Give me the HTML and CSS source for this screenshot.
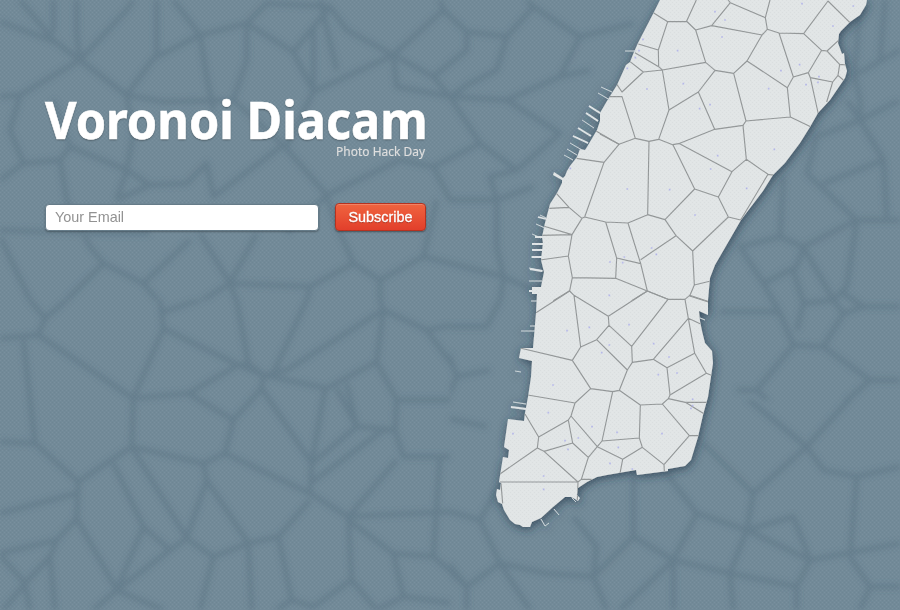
FILE: index.html
```
<!DOCTYPE html>
<html lang="en">
<head>
<meta charset="utf-8">
<title>Voronoi Diacam</title>
<link rel="stylesheet" href="styles.css">
</head>
<body>
<svg class="scene" viewBox="0 0 900 610" aria-hidden="true">
  <defs>
    <pattern id="weave" width="4" height="4" patternUnits="userSpaceOnUse">
      <path class="weave-light" d="M0 0h1v1h-1zM2 2h1v1h-1z"/>
      <path class="weave-dark" d="M2 0h1v1h-1zM0 2h1v1h-1z"/>
    </pattern>
    <filter id="soft" x="-5%" y="-5%" width="110%" height="110%"><feGaussianBlur stdDeviation="2.7"/></filter>
    <filter id="shadow" x="-10%" y="-10%" width="120%" height="120%"><feDropShadow dx="1" dy="2" stdDeviation="5" flood-color="#22384a" flood-opacity=".75"/></filter>
    <path id="coast" d="M660 0L653 14 638 43 634 52 630 62 626 65 617 85 607 101 600 113 600 121 597 130 587 147 585 150 580 149 577 157 570 166 567 171 565 176 563 178 554 172 553 175 562 180 562 183 557 193 550 204 545 223 542 237 543 243 541 260 544 272 541 287 532 287 532 290 529 290 529 292 532 292 532 294 537 294 536 313 533 348 521 348 519 358 532 361 531 377 528 397 525 413 524 421 508 419 504 447 509 450 508 458 503 457 499 482 501 483 500 490 497 489 496 495 498 502 502 504 504 510 510 520 515 524 520 525 523 527 530 527 532 522 541 518 553 507 565 497 571 497 575 499 578 501 580 498 577 495 578 488 587 482 597 477 607 475 636 470 637 475 668 471 668 469 685 466 691 460 698 437 703 415 708 397 713 363 712 351 705 343 702 331 700 321 699 311 708 315 708 300 710 278 715 265 726 246 741 220 763 191 773 175 785 163 800 143 810 127 818 113 830 100 845 78 847 71 845 64 844 53 842 54 838 43 839 34 841 31 850 22 860 15 866 5 867 0Z"/>
    <clipPath id="land"><use href="#coast"/></clipPath>
    <clipPath id="north-west"><rect width="400" height="300"/></clipPath>
    <clipPath id="south-west"><rect y="300" width="450" height="310"/></clipPath>
    <clipPath id="north"><rect x="400" width="300" height="300"/></clipPath>
    <clipPath id="east"><rect x="700" y="100" width="200" height="300"/></clipPath>
    <clipPath id="south-east"><path d="M450 300H700V400H900V610H450Z"/></clipPath>
  </defs>

  <rect class="water" width="900" height="610"/>
  <g class="faint" filter="url(#soft)">
    <g clip-path="url(#north-west)"><g transform="scale(.33333)">
      <path d="M0 65L165 125 240 180 380 285 490 305 700 300 850 435 980 585 860 700M240 180L380 30 400 0M240 180L60 285 0 290M60 0L165 125M160 0V100M230 0V100L240 180M380 285L460 175 600 105 520 0M470 0V175M600 105L740 70 880 155 940 275 860 440M740 70V180L700 300M600 105L620 230 640 330M740 70L800 10 990 20 880 155M940 80V270M990 20L1040 90 1180 165 1230 115M1180 165L1300 215M1180 165L1190 260 1350 290M940 275L1180 165M960 0L1010 210M60 285L30 390 70 490 0 540M70 490L180 480 210 440 160 300M180 480L200 600 270 740 310 790 430 850 480 910M210 440L380 510 450 555 560 550 620 490 640 590 850 435M380 285L400 400 380 510 350 600M0 690L270 700 450 700M0 710L90 900M310 790L200 900M430 850L570 720M600 700L690 850 600 905M690 850L770 700M690 850L710 905M690 850L930 860 1060 790 1000 650 980 585 1200 480 1300 500M930 860L920 905M1060 790L1140 840 1270 770M1140 840V910M450 555L350 600"/>
    </g></g>
    <g clip-path="url(#south-west)"><g transform="translate(0 300) scale(.33333)">
      <path d="M0 115L115 105 135 55 90 0M135 55L200 0M70 120L105 430 0 425M115 105L400 295 490 85 480 0M490 35L600 0M490 85L715 195 790 225 980 265 1130 185 1150 30 860 210M1140 0L1150 30M715 195L745 190 710 0M745 190L790 225 860 210 820 220 920 0M790 225L785 265 700 360 675 460 610 490 395 440 235 545 105 430M400 295L395 440M400 295L565 280 715 195M565 280L700 360M785 265L935 490 975 265M935 490L930 580 675 460M935 490L1070 380 1010 265M930 550L1150 390 1185 390M930 580L1045 650 1350 635M930 600L835 710 745 730 620 540 610 490M620 540L560 715 395 440M745 730L640 770 560 715 510 750 430 680 340 490M640 770L600 930M745 730L755 930M835 710L875 900 940 920 1055 840 1045 650 1190 480M1045 660L1180 760 1300 770 1360 820M1055 840L1130 930 1210 890 1180 760M1210 890L1360 910M1320 470L1300 770M1130 185L1190 300 1185 390 1210 470 1360 470M1190 300H1360M1040 250L1070 380 1185 390M1150 30L1280 90 1360 75M1280 90L1360 200M235 545L230 655 350 870 430 680M0 640L230 580M0 760L170 720 230 655M0 765L75 850 150 770 170 720M75 850L90 930M75 850L10 930M150 770L165 930M350 870L510 750M350 870L490 930M350 870L280 930M875 900L830 930"/>
    </g></g>
    <g clip-path="url(#north)"><g transform="translate(300 0) scale(.33333)">
      <path d="M280 165L430 30 420 0M280 165L400 230 500 150 500 95M400 230L450 290M430 30L500 95 620 110 700 20 680 0M700 20L840 110 1000 70M840 110L780 230 870 210M620 110L590 210 510 250 450 290 620 300 780 230M290 260L450 290 540 430 650 510 780 400 620 300M300 480L400 500 450 600 590 600 700 560M540 430L400 500M590 600L570 530 650 510M590 600V740L610 830 700 870M240 840L370 770 610 830 600 905M370 770L410 600"/>
    </g></g>
    <g clip-path="url(#south-east)"><g transform="translate(420 300) scale(.33333)">
      <path d="M0 80H200L240 0M50 60L110 230 60 350 200 380M110 230L210 210M0 300L60 350 70 470H0M70 470V630L180 660 240 550M0 635L70 630V770L140 860 240 790 180 660M140 860V930M0 770L60 790 140 860M240 790L380 820 520 830 640 710 760 780 830 640 740 520M240 790L330 930M520 830L530 740 460 650M520 830L560 930M640 710V530M760 780L600 930M760 780L930 820 1130 860 1170 780 1440 730M760 780V930M830 640L980 690 930 820 940 930M980 690L1170 780 1120 650 980 690M980 690L1000 580 850 430M1000 580L1160 440 950 270M1340 240L1160 440 1210 510 1310 530 1290 770M1310 530L1440 500M1130 860L1130 930M1290 770L1350 860H1440M1350 860L1320 930"/>
    </g></g>
    <g clip-path="url(#east)"><g transform="translate(700 100) scale(.33333)">
      <path d="M320 220L470 360 440 560 400 600 310 440 470 360H600M320 220L350 110 480 60 550 180 370 250M550 180L560 350M440 0L480 60 600 0M480 60V0M250 230L240 410 310 440 290 500 190 550 120 440 240 410M190 550L240 640 280 735 370 740 430 640 400 600 310 610 280 510M310 610L290 690M430 580L490 620H600M490 620L430 640M60 635H220L240 640M280 735L170 870 110 870M370 740L510 840H600M510 840L430 910M170 870L210 910"/>
    </g></g>
    <path class="small" d="M860 0L855 75 860 100M855 75L900 50M885 0L880 60"/>
  </g>

  <g class="land" filter="url(#shadow)">
    <use href="#coast"/>
    <g class="piers">
      <path d="M625 51H636M601 87L612 92M598 93L610 100M589 106L600 113M586 113L598 121M582 120L594 128M573 136L588 143M570 143L582 150M567 149L577 155M564 155L573 160M540 215L546 218M536 224L545 228M532 234L541 238M533 244H544M532 250H544M531 257H543M529 268L543 271M529 281H542M531 301H537M530 326H535M521 331H535M515 371L521 372M513 402L526 404M554 509L559 515M541 519L545 526 549 523M572 498L576 502M700 318L705 320"/>
      <path class="thick" d="M589 106L600 113M586 113L598 121M578 128L591 136M573 136L588 143M538 217L546 219M532 244H544M532 250H544M532 257H543M530 269L542 271M511 407L526 409M535 237H544M529 291H538"/>
    </g>
  </g>

  <g class="cells" clip-path="url(#land)">
    <g transform="translate(600 0) scale(.33333)">
      <path d="M160 38L203 65H259L289 0M203 65L175 150 176 200 187 210 130 216 90 185M115 132L175 150M105 158L176 200M130 216L66 276 45 245M0 290H66L106 415 57 433 0 402M259 63L287 90 335 77 391 8 384 0M391 8L496 53 510 0M496 53L502 88 486 105 335 77M287 90L317 187 187 210 207 330 176 418 147 424 106 415M317 187L345 211 401 220 441 183 486 105M345 211L295 276 207 330M295 276L344 388 236 431 218 434 176 418M344 388L429 376 438 363 401 220M441 183L562 263 571 351 438 363M502 88L537 99 611 101 684 3 750 68M537 99L580 231 562 263M580 231L625 218 665 151 611 101M665 151L681 153 718 119M681 153L719 193 740 195M719 193L714 226 698 246 631 233 625 218M631 233L655 342M698 246L680 306M714 226L730 240M571 351L632 380"/>
    </g>
    <g transform="translate(500 100) scale(.33333)">
      <path d="M288 93L357 133 312 187 230 175M312 187L254 351 246 355 207 322 167 278M207 322L148 325M254 351L317 366 384 369 443 344 447 124M130 378L216 404 246 355M120 406L216 404 205 468 120 480M205 468L217 533 209 572 160 602M317 366L350 474 347 535 217 533M350 474L422 491 384 369M422 479L528 407 495 359 443 344M495 359L584 267 518 133M536 130L696 215 739 178 729 76M584 267L655 291 696 215M655 291L685 351 722 360 804 223 739 178M804 223L825 226M685 351L578 453 528 407M578 453L583 555 632 543M583 555L569 588 625 606M422 491L442 573 504 598M347 535L442 573 395 602"/>
    </g>
    <g transform="translate(500 280) scale(.33333)">
      <path d="M108 98L209 33 222 46 325 109 442 33 504 58H555L565 115 584 220 501 263 460 238 565 115 602 132M555 58L569 46 630 66M222 46L242 201 217 241 60 204M242 201L290 179 327 136 325 109M327 136L395 199 504 58M395 199L397 247 460 238M397 247L382 270 290 179M382 270L358 331 338 335 272 326 217 241M272 326L225 369 83 345M225 369L213 408 205 420 116 471 75 402M116 471L112 504 0 582M112 504L132 514 218 489 205 420M132 514L234 606H0M213 408L292 500 265 532 218 489M338 335L306 483 292 500 368 538 427 502 418 474 306 483M358 331L421 375 418 474M421 375L487 372 505 356 510 345 501 263M584 220L619 280 640 288M619 280L510 345M505 356L556 367H625M556 367L613 402M487 372L568 467H597M568 467L492 554 493 574M427 502L492 554M368 538L360 580M265 532L244 598H275M244 598L234 606 232 660M3 610L8 670"/>
    </g>
  </g>

  <g class="sites">
    <path transform="translate(600 0) scale(.33333)" d="M345 35h0M375 60h0M366 111h0M606 11h0M760 18h0M699 78h0M599 194h0M543 212h0M506 266h0M618 254h0M657 230h0M654 247h0M129 118h0M117 152h0M106 173h0M82 205h0M233 152h0M250 251h0M141 267h0M330 314h0M299 326h0M523 448h0M353 467h0M332 507h0M82 567h0M209 569h0M440 565h0"/>
    <path transform="translate(500 100) scale(.33333)" d="M211 205h0M585 345h0M455 444h0M469 463h0M373 471h0M368 488h0M330 486h0M328 586h0"/>
    <path transform="translate(500 280) scale(.33333)" d="M268 142h0M201 152h0M387 134h0M328 195h0M305 218h0M461 191h0M507 231h0M475 284h0M531 279h0M159 315h0M145 398h0M39 461h0M276 440h0M351 457h0M486 461h0M355 502h0M235 474h0M195 482h0M204 508h0M330 550h0M397 567h0M131 588h0M131 628h0M578 358h0M578 377h0M573 385h0"/>
  </g>
  <rect width="900" height="610" fill="url(#weave)"/>
</svg>

<main class="intro">
  <header class="brand">
    <h1 class="title">Voronoi Diacam</h1>
    <p class="tagline">Photo Hack Day</p>
  </header>
  <form class="signup">
    <input class="email" type="email" placeholder="Your Email" aria-label="Your Email">
    <button class="subscribe" type="button">Subscribe</button>
  </form>
</main>
</body>
</html>
```

FILE: styles.css
```
body {
  margin: 0;
  height: 610px;
  overflow: hidden;
  background: #728997;
}

.scene {
  position: absolute;
  inset: 0;
  width: 900px;
  height: 610px;
}

.water { fill: #728a98; }
.weave-light { fill: #fff; fill-opacity: .06; }
.weave-dark { fill: #000; fill-opacity: .03; }

.faint {
  fill: none;
  stroke: #587180;
  stroke-width: 16;
  stroke-opacity: .42;
  stroke-linejoin: round;
}
.faint .small { stroke-width: 5; }

.land { fill: #e1e5e6; }
.piers { fill: none; stroke: #ccd5d9; stroke-width: 1; }
.piers .thick { stroke: #dfe4e6; stroke-width: 1.8; }

.cells {
  fill: none;
  stroke: #949899;
  stroke-width: 3.4;
  stroke-linejoin: round;
}

.sites {
  fill: none;
  stroke: #b6b8ea;
  stroke-width: 5;
  stroke-linecap: square;
}

.intro {
  position: relative;
  width: 381px;
  padding: 87px 0 0 45px;
}

.brand {
  height: 116px;
  color: #fff;
}

.title {
  margin: 0;
  font: 700 52px/64px "Noto Sans", sans-serif;
  white-space: nowrap;
  text-shadow: 0 1px 2px rgba(0, 0, 0, .4);
  -webkit-text-stroke: .6px #fff;
  transform: scaleX(.936);
  transform-origin: left;
}

.tagline {
  margin: -8px 0 0;
  color: #dedede;
  font: 400 13px/16px "Noto Sans", sans-serif;
  text-align: right;
  -webkit-text-stroke: .2px #dedede;
  transform: translateX(-1px) scaleX(.92);
  transform-origin: right;
}

.signup {
  display: flex;
  justify-content: space-between;
  align-items: center;
  height: 28px;
}

.email {
  box-sizing: border-box;
  width: 274px;
  height: 27px;
  padding: 0 9px 1px;
  border: 1px solid #657b88;
  border-radius: 4px;
  background: #fff;
  box-shadow: 0 1px 2px rgba(0, 0, 0, .3);
  font: 14.4px "Liberation Sans", sans-serif;
}
.email::placeholder { color: #929292; }

.subscribe {
  box-sizing: border-box;
  width: 91px;
  height: 28px;
  padding: 0 0 1px;
  border: 1px solid #b53220;
  border-radius: 4px;
  background: linear-gradient(#f0643f, #e23f2b);
  box-shadow: inset 0 1px 0 rgba(255, 255, 255, .2), 0 1px 2px rgba(0, 0, 0, .4);
  color: #fff;
  font: 14.4px "Liberation Sans", sans-serif;
  -webkit-text-stroke: .3px #fff;
  text-shadow: 0 1px 1px rgba(0, 0, 0, .3);
}
```
